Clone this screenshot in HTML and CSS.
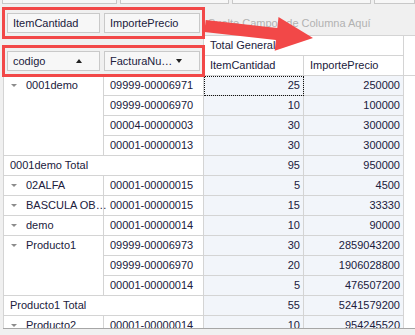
FILE: index.html
```html
<!DOCTYPE html>
<html lang="es">
<head>
  <meta charset="UTF-8">
  <title>Pivot - Facturas</title>
  <link rel="stylesheet" href="styles.css">
</head>
<body>
  <div class="pivot">
    <div class="filter-bar">
      <span class="stub stub-1"></span>
      <span class="stub stub-2"></span>
      <span class="stub stub-3"></span>
      <span class="stub stub-4"></span>
    </div>

    <div class="top">
      <div class="left-zone">
        <div class="field-row">
          <div class="field f-a">ItemCantidad</div>
          <div class="field f-b">ImportePrecio</div>
        </div>
        <div class="field-row">
          <div class="field f-a">codigo <span class="sort up"></span></div>
          <div class="field f-b">FacturaNu… <span class="sort down"></span></div>
        </div>
      </div>
      <div class="right-zone">
        <div class="col-fields">Suelte Campos de Columna Aquí</div>
        <div class="col-headers">
          <div class="hdr hdr-total">Total General</div>
          <div class="hdr-row">
            <div class="hdr">ItemCantidad</div>
            <div class="hdr">ImportePrecio</div>
          </div>
        </div>
      </div>
    </div>

    <div class="grid-body">
      <table class="grid">
        <tbody>
          <tr>
            <td class="rh" rowspan="4"><span class="exp"></span>0001demo</td>
            <td class="rh2">09999-00006971</td>
            <td class="val focus">25</td>
            <td class="val">250000</td>
          </tr>
          <tr>
            <td class="rh2">09999-00006970</td>
            <td class="val">10</td>
            <td class="val">100000</td>
          </tr>
          <tr>
            <td class="rh2">00004-00000003</td>
            <td class="val">30</td>
            <td class="val">300000</td>
          </tr>
          <tr>
            <td class="rh2">00001-00000013</td>
            <td class="val">30</td>
            <td class="val">300000</td>
          </tr>
          <tr>
            <td class="tot" colspan="2">0001demo Total</td>
            <td class="val">95</td>
            <td class="val">950000</td>
          </tr>
          <tr>
            <td class="rh"><span class="exp"></span>02ALFA</td>
            <td class="rh2">00001-00000015</td>
            <td class="val">5</td>
            <td class="val">4500</td>
          </tr>
          <tr>
            <td class="rh"><span class="exp"></span>BASCULA OB…</td>
            <td class="rh2">00001-00000015</td>
            <td class="val">15</td>
            <td class="val">33330</td>
          </tr>
          <tr>
            <td class="rh"><span class="exp"></span>demo</td>
            <td class="rh2">00001-00000014</td>
            <td class="val">10</td>
            <td class="val">90000</td>
          </tr>
          <tr>
            <td class="rh" rowspan="3"><span class="exp"></span>Producto1</td>
            <td class="rh2">09999-00006973</td>
            <td class="val">30</td>
            <td class="val">2859043200</td>
          </tr>
          <tr>
            <td class="rh2">09999-00006970</td>
            <td class="val">20</td>
            <td class="val">1906028800</td>
          </tr>
          <tr>
            <td class="rh2">00001-00000014</td>
            <td class="val">5</td>
            <td class="val">476507200</td>
          </tr>
          <tr>
            <td class="tot" colspan="2">Producto1 Total</td>
            <td class="val">55</td>
            <td class="val">5241579200</td>
          </tr>
          <tr>
            <td class="rh"><span class="exp"></span>Producto2</td>
            <td class="rh2">00001-00000014</td>
            <td class="val">10</td>
            <td class="val">954245520</td>
          </tr>
        </tbody>
      </table>
    </div>

    <!-- annotations -->
    <div class="mark mark-data"></div>
    <div class="mark mark-rows"></div>
    <svg class="arrow" width="415" height="335" viewBox="0 0 415 335">
      <polygon points="205.7,20 277.3,27.9 278.5,17 313,38 274.7,50.8 275.9,39.9 204.3,32" fill="#f24848"/>
    </svg>
  </div>
</body>
</html>
```

FILE: styles.css
```css
body {
  margin: 0;
  padding: 0;
  background-color: #f0f0f0;
  font-family: "Liberation Sans", Arial, sans-serif;
  font-size: 11px;
  color: #20203c;
}

.pivot {
  position: relative;
  width: 415px;
  height: 335px;
  overflow: hidden;
}

/* filter area, scrolled so only the bottom shows */
.filter-bar {
  display: flex;
  height: 8px;
}

.stub {
  height: 3px;
  background-color: #f7f7f7;
  border: 1px solid #c8c8c8;
  border-top: none;
}

.stub-1 { margin-left: 2px; width: 116px; }
.stub-2 { margin-left: 3px; width: 109px; }
.stub-3 { margin-left: 3px; width: 140px; }
.stub-4 { margin-left: 3px; width: 40px; }

.top {
  display: flex;
  height: 67px;
}

.left-zone {
  width: 203px;
  padding: 5px 0 0 7px;
  box-sizing: border-box;
  display: flex;
  flex-direction: column;
  gap: 18px;
}

.field-row {
  display: flex;
  gap: 4px;
}

.field {
  height: 20px;
  box-sizing: border-box;
  background-color: #f7f7f7;
  border: 1px solid #c9c9c9;
  padding: 0 0 0 5px;
  line-height: 18px;
  display: flex;
  align-items: center;
  justify-content: space-between;
  white-space: nowrap;
}

.f-a { width: 93px; }
.f-b { width: 96px; }

.sort {
  width: 0;
  height: 0;
  border-left: 3px solid transparent;
  border-right: 3px solid transparent;
  margin-right: 17px;
}

.sort.up { border-bottom: 4px solid #222; }
.sort.down { border-top: 4px solid #222; }

.right-zone {
  flex: 1;
}

.col-fields {
  height: 27px;
  padding-left: 5px;
  line-height: 30px;
  color: #b2b2b2;
  white-space: nowrap;
}

.col-headers {
  border-top: 1px solid #d4d4d4;
  background-color: #fff;
  height: 39px;
}

.hdr {
  width: 200px;
  height: 19px;
  box-sizing: border-box;
  border-left: 1px solid #d4d4d4;
  border-right: 1px solid #d4d4d4;
  padding-left: 6px;
  line-height: 19px;
}

.hdr-total {
  width: 201px;
  height: 20px;
  border-bottom: 1px solid #d4d4d4;
}

.hdr-row {
  display: flex;
}

.hdr-row .hdr {
  width: 100px;
  border-left: none;
  padding-left: 6px;
}

.hdr-row .hdr:first-child {
  width: 101px;
  border-left: 1px solid #d4d4d4;
}

.grid-body {
  margin-left: 3px;
  height: 252px;
  background-color: #fff;
  border-top: 1px solid #d4d4d4;
  border-bottom: 1px solid #a6a6a6;
  overflow: hidden;
}

.grid {
  width: 401px;
  table-layout: fixed;
  border-collapse: separate;
  border-spacing: 0;
  border-left: 1px solid #d4d4d4;
}

.grid td {
  padding: 0;
  line-height: 19px;
  border-right: 1px solid #d4d4d4;
  border-bottom: 1px solid #d4d4d4;
  white-space: nowrap;
  vertical-align: top;
}

.rh {
  background-color: #fff;
  padding-left: 7px !important;
}

.rh2 {
  background-color: #fff;
  padding-left: 6px !important;
}

.tot {
  background-color: #fff;
  padding-left: 6px !important;
}

.exp {
  display: inline-block;
  width: 0;
  height: 0;
  border-left: 3px solid transparent;
  border-right: 3px solid transparent;
  border-top: 3px solid #8c8c8c;
  margin-right: 9px;
  vertical-align: 2px;
}

.val {
  background-color: #f2f5fa;
  text-align: right;
  padding-right: 3px !important;
}

.focus {
  outline: 1px dotted #111;
  outline-offset: -1px;
}

.mark {
  position: absolute;
  left: 2px;
  width: 203px;
  box-sizing: border-box;
  border: 3px solid #f24848;
}

.mark-data {
  top: 7px;
  height: 32px;
}

.mark-rows {
  top: 45px;
  height: 32px;
}

.arrow {
  position: absolute;
  left: 0;
  top: 0;
  pointer-events: none;
}
```
